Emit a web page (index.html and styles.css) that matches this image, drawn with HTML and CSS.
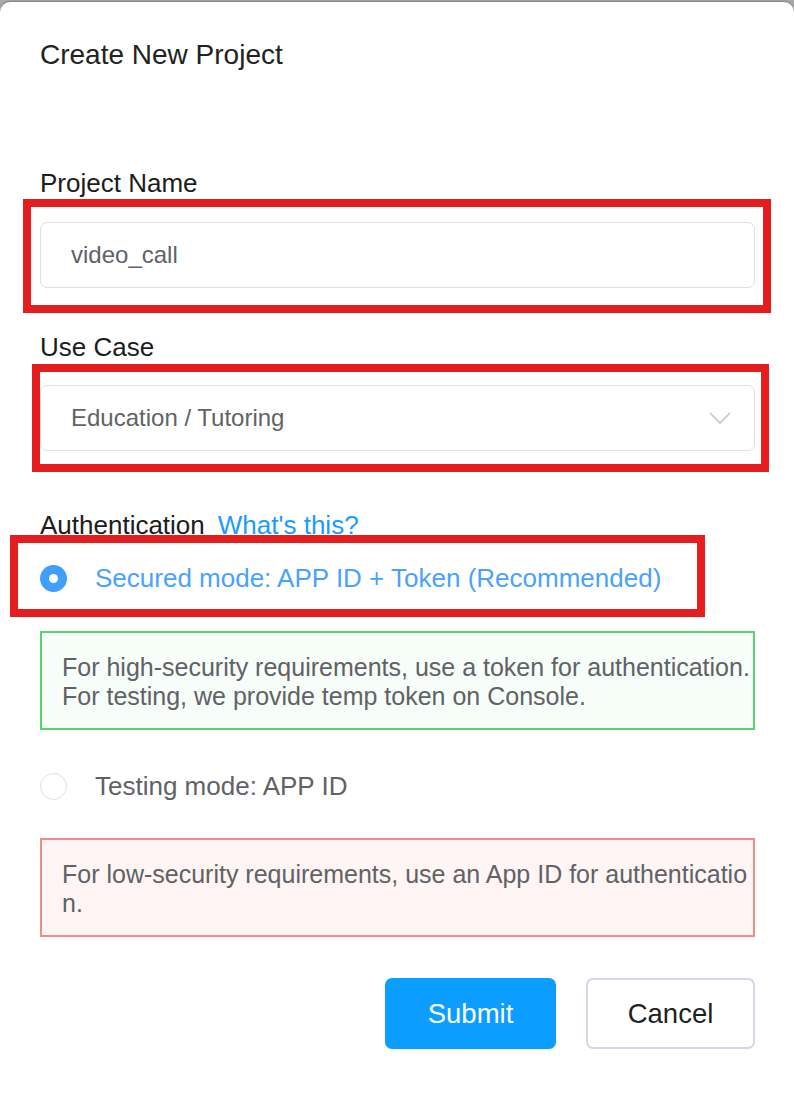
FILE: index.html
```html
<!DOCTYPE html>
<html lang="en">
<head>
<meta charset="utf-8">
<title>Create New Project</title>
<link rel="stylesheet" href="styles.css">
</head>
<body>
<div class="dialog">
  <h1 class="title">Create New Project</h1>

  <div class="form-item item-name">
    <label class="label">Project Name</label>
    <div class="input">video_call</div>
  </div>

  <div class="form-item item-case">
    <label class="label">Use Case</label>
    <div class="input select">
      <span>Education / Tutoring</span>
      <svg class="chevron" width="22" height="12" viewBox="0 0 22 12"><path d="M1 1 L11 11 L21 1" fill="none" stroke="#c0c4cc" stroke-width="1.6"/></svg>
    </div>
  </div>

  <div class="auth">
    <div class="auth-label"><span class="label-inline">Authentication</span><a class="link">What's this?</a></div>
    <div class="radio-row row-secured">
      <span class="radio checked"></span>
      <span class="radio-text active">Secured mode: APP ID + Token (Recommended)</span>
    </div>
    <div class="note note-green">For high-security requirements, use a token for authentication.<br>For testing, we provide temp token on Console.</div>
    <div class="radio-row row-testing">
      <span class="radio"></span>
      <span class="radio-text">Testing mode: APP ID</span>
    </div>
    <div class="note note-red">For low-security requirements, use an App ID for authenticatio<br>n.</div>
  </div>

  <div class="actions">
    <button class="btn btn-primary">Submit</button>
    <button class="btn btn-default">Cancel</button>
  </div>

  <div class="mark mark-1"></div>
  <div class="mark mark-2"></div>
  <div class="mark mark-3"></div>
</div>
</body>
</html>
```
FILE: styles.css
```css
html, body {
  margin: 0;
  padding: 0;
  background: #aaaaaa;
}
body {
  font-family: "Liberation Sans", Arial, sans-serif;
  width: 794px;
  height: 1102px;
  overflow: hidden;
}
.dialog {
  position: relative;
  box-sizing: border-box;
  margin-top: 2px;
  height: 1100px;
  background: #ffffff;
  border-radius: 10px 10px 0 0;
  box-shadow: 0 -1px 2px rgba(0,0,0,0.25);
  padding: 36px 39px 0 40px;
}
.title {
  margin: 0;
  font-size: 28px;
  line-height: 34px;
  font-weight: normal;
  color: #222222;
}
.form-item {
  display: flex;
  flex-direction: column;
}
.item-name { margin-top: 96px; }
.item-case { margin-top: 44px; }
.label {
  font-size: 26px;
  line-height: 30px;
  color: #1c1c1c;
  margin-bottom: 24px;
}
.item-case .label { margin-bottom: 23px; }
.input {
  box-sizing: border-box;
  height: 66px;
  border: 1.5px solid #dcdfe6;
  border-radius: 7px;
  padding: 0 30px;
  display: flex;
  align-items: center;
  font-size: 24px;
  color: #606266;
}
.select {
  justify-content: space-between;
  padding-right: 23px;
}
.chevron { display: block; }
.auth { margin-top: 59px; }
.auth-label {
  display: flex;
  align-items: baseline;
  gap: 13px;
  font-size: 26px;
  line-height: 30px;
}
.label-inline { color: #1c1c1c; }
.link { color: #1a9cff; }
.radio-row {
  display: flex;
  align-items: center;
  height: 40px;
  gap: 28px;
}
.row-secured { margin-top: 18px; }
.row-testing { margin-top: 36px; }
.radio {
  box-sizing: border-box;
  width: 27px;
  height: 27px;
  border-radius: 50%;
  border: 1.5px solid #dcdfe6;
  background: #ffffff;
  flex: none;
  position: relative;
}
.radio.checked {
  border: none;
  background: #409eff;
}
.radio.checked::after {
  content: "";
  position: absolute;
  left: 50%;
  top: 50%;
  width: 9px;
  height: 9px;
  margin: -4.5px 0 0 -4.5px;
  border-radius: 50%;
  background: #ffffff;
}
.radio-text {
  font-size: 26px;
  color: #606266;
}
.radio-text.active { color: #4aa2ff; }
.note {
  box-sizing: border-box;
  height: 99px;
  padding: 20px 20px 17px;
  font-size: 25px;
  line-height: 29px;
  color: #606266;
  border: 2px solid;
  white-space: nowrap;
}
.note-green {
  margin-top: 33px;
  border-color: #58d46c;
  background: #f7fdf9;
}
.note-red {
  margin-top: 32px;
  border-color: #f28b85;
  background: #fef5f4;
}
.actions {
  display: flex;
  justify-content: flex-end;
  gap: 30px;
  margin-top: 41px;
}
.btn {
  box-sizing: border-box;
  height: 71px;
  border-radius: 7px;
  font-family: "Liberation Sans", Arial, sans-serif;
  font-size: 27.5px;
  cursor: pointer;
}
.btn-primary {
  width: 171px;
  background: #0b9dff;
  border: none;
  color: #ffffff;
}
.btn-default {
  width: 169px;
  background: #ffffff;
  border: 2px solid #d8d5e7;
  color: #1f1f1f;
}
.mark {
  position: absolute;
  box-sizing: border-box;
  border: 8px solid #e41d1f;
  pointer-events: none;
}
.mark-1 { left: 23px; top: 197px; width: 748px; height: 114px; }
.mark-2 { left: 32px; top: 362px; width: 737px; height: 108px; }
.mark-3 { left: 10px; top: 533px; width: 695px; height: 82px; }
```
